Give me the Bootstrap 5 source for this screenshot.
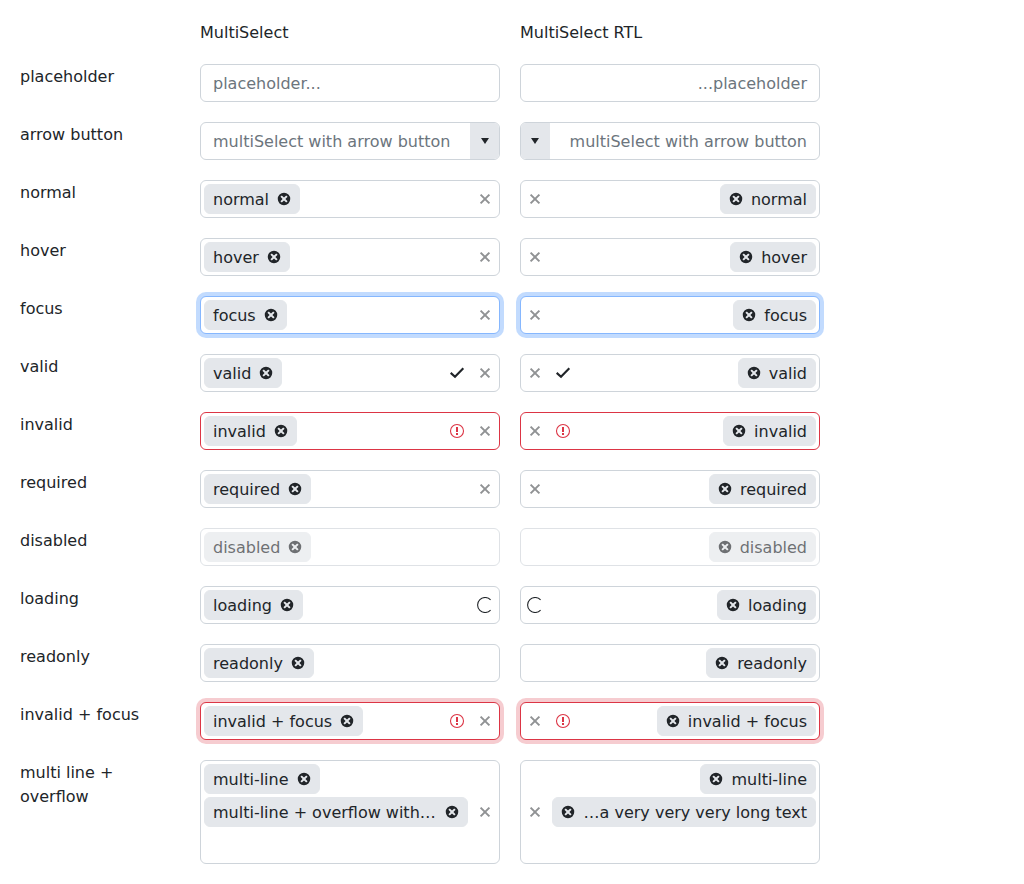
<!DOCTYPE html>
<html lang="en">
<head>
<meta charset="utf-8">
<meta name="viewport" content="width=device-width, initial-scale=1">
<title>MultiSelect states</title>
<link href="https://cdn.jsdelivr.net/npm/bootstrap@5.3.0/dist/css/bootstrap.min.css" rel="stylesheet">
<style>
body { font-family: "DejaVu Sans", sans-serif; font-size: 16px; line-height: 24px; color: #212529; background: #fff; }
.states { display: grid; grid-template-columns: 160px 300px 300px; gap: 20px; padding: 20px; }
.caption-text { height: 24px; padding-top: 1px; }
.ms { height: 38px; border: 1px solid #ced4da; border-radius: 6px; background: #fff; overflow: hidden; }
.ms-tall { height: 104px; }
.ms-focus { border-color: #86b7fe; box-shadow: 0 0 0 4px rgba(13,110,253,.25); }
.ms-invalid { border-color: #dc3545; }
.ms-invalid.ms-focus { box-shadow: 0 0 0 4px rgba(220,53,69,.25); }
.ms-disabled { opacity: .65; }
.tags { min-width: 0; padding: 3px; gap: 3px; align-content: flex-start; }
.tag { height: 30px; border: 1px solid #e4e7eb; border-radius: 6px; background: #e4e7eb; padding-inline-start: 8px; }
.tag-text { padding-top: 2px; }
.tag-x { width: 30px; }
.hint { color: #6c757d; padding: 2px 12px 0; }
.slot { width: 28px; color: #212529; }
.clear { color: #909294; }
.alert-mark { color: #dc3545; }
.arrow { width: 29px; background: #e4e7eb; padding-inline-start: 1px; }
svg { display: block; overflow: visible; }
</style>
</head>
<body>
<svg width="0" height="0" class="position-absolute" aria-hidden="true">
  <symbol id="i-remove" viewBox="0 0 16 16"><path fill="currentColor" fill-rule="evenodd" d="M8 1.75a6.25 6.25 0 1 0 0 12.5a6.25 6.25 0 0 0 0-12.5ZM5.8 4.4 8 6.6l2.2-2.2 1.4 1.4L9.4 8l2.2 2.2-1.4 1.4L8 9.4l-2.2 2.2-1.4-1.4L6.6 8l-2.2-2.2Z"/></symbol>
  <symbol id="i-clear" viewBox="0 0 16 16"><path d="M3.6 3.6l8.8 8.8M12.4 3.6l-8.8 8.8" stroke="currentColor" stroke-width="2" fill="none"/></symbol>
  <symbol id="i-check" viewBox="0 0 16 16"><path d="M1.7 7.9 6 11.8 14.3 3.3" stroke="currentColor" stroke-width="2.1" fill="none"/></symbol>
  <symbol id="i-alert" viewBox="0 0 16 16"><circle cx="8" cy="8" r="6.5" stroke="currentColor" stroke-width="1.1" fill="none"/><path d="M7 4h2v5H7zM7 10h2v2H7z" fill="currentColor"/></symbol>
  <symbol id="i-load" viewBox="0 0 16 16"><path d="M13.6 2.9A7.5 7.5 0 1 0 13.6 13.1" stroke="currentColor" stroke-width="1.1" fill="none"/></symbol>
  <symbol id="i-down" viewBox="0 0 16 16"><path d="M4 5h8l-4 6z" fill="currentColor"/></symbol>
</svg>

<main class="states">
  <div></div><div class="caption-text">MultiSelect</div><div class="caption-text">MultiSelect RTL</div>

  <div class="caption-text">placeholder</div>
  <div class="ms d-flex align-items-center"><span class="hint">placeholder...</span></div>
  <div class="ms d-flex align-items-center" dir="rtl"><span class="hint">placeholder...</span></div>

  <div class="caption-text">arrow button</div>
  <div class="ms d-flex align-items-center"><span class="hint flex-grow-1 text-nowrap">multiSelect with arrow button</span><span class="arrow h-100 d-flex align-items-center justify-content-center"><svg width="16" height="16"><use href="#i-down"/></svg></span></div>
  <div class="ms d-flex align-items-center" dir="rtl"><span class="hint flex-grow-1 text-nowrap">multiSelect with arrow button</span><span class="arrow h-100 d-flex align-items-center justify-content-center"><svg width="16" height="16"><use href="#i-down"/></svg></span></div>
</main>

<template id="field">
  <div class="ms d-flex align-items-center">
    <div class="tags d-flex flex-wrap flex-grow-1 align-self-stretch"></div>
  </div>
</template>

<script>
const fields = [
  { label: "normal", icons: ["clear"] },
  { label: "hover", icons: ["clear"] },
  { label: "focus", icons: ["clear"], state: ["ms-focus"] },
  { label: "valid", icons: ["check", "clear"] },
  { label: "invalid", icons: ["alert", "clear"], state: ["ms-invalid"] },
  { label: "required", icons: ["clear"] },
  { label: "disabled", icons: [], state: ["ms-disabled"] },
  { label: "loading", icons: ["load"] },
  { label: "readonly", icons: [] },
  { label: "invalid + focus", icons: ["alert", "clear"], state: ["ms-invalid", "ms-focus"] },
  { label: "multi line + overflow", icons: ["clear"], state: ["ms-tall"],
    ltr: ["multi-line", "multi-line + overflow with…"],
    rtl: ["multi-line", "a very very very long text…"] }
];
const tint = { clear: "clear", alert: "alert-mark" };
const icon = name => `<svg width="16" height="16"><use href="#i-${name}"/></svg>`;
const grid = document.querySelector(".states");
for (const f of fields) {
  const label = document.createElement("div");
  label.className = "caption-text";
  label.textContent = f.label;
  grid.append(label);
  for (const dir of ["ltr", "rtl"]) {
    const box = document.getElementById("field").content.firstElementChild.cloneNode(true);
    box.dir = dir;
    box.classList.add(...(f.state || []));
    box.firstElementChild.innerHTML = (f[dir] || [f.label]).map((t, i) =>
      `<span class="tag d-flex align-items-center justify-content-between${i ? " w-100" : ""}"><span class="tag-text text-nowrap">${t}</span><span class="tag-x d-flex flex-shrink-0 justify-content-center">${icon("remove")}</span></span>`).join("");
    box.insertAdjacentHTML("beforeend", f.icons.map(n =>
      `<span class="slot ${tint[n] || ""} d-flex flex-shrink-0 justify-content-center">${icon(n)}</span>`).join(""));
    grid.append(box);
  }
}
</script>
<script src="https://cdn.jsdelivr.net/npm/bootstrap@5.3.0/dist/js/bootstrap.bundle.min.js"></script>
</body>
</html>
